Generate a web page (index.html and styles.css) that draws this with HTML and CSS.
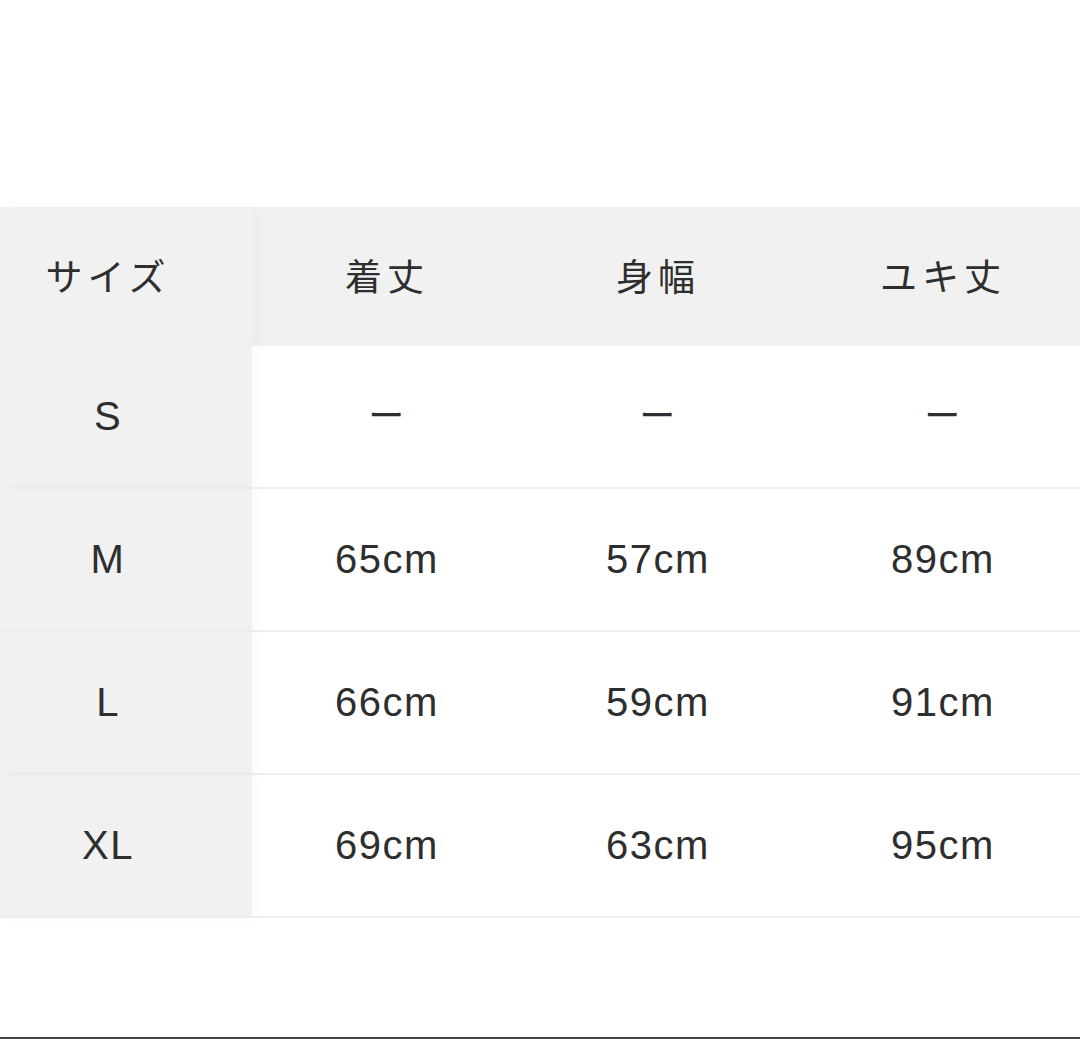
FILE: index.html
```html
<!DOCTYPE html>
<html lang="ja">
<head>
<meta charset="utf-8">
<title>サイズ表</title>
<link rel="stylesheet" href="styles.css">
</head>
<body>
<div class="page">
  <div class="table">
    <div class="row head">
      <div class="cell label jp">サイズ</div>
      <div class="cell jp">着丈</div>
      <div class="cell jp">身幅</div>
      <div class="cell jp last">ユキ丈</div>
    </div>
    <div class="row">
      <div class="cell label">S</div>
      <div class="cell dash">ー</div>
      <div class="cell dash">ー</div>
      <div class="cell dash last">ー</div>
    </div>
    <div class="row">
      <div class="cell label">M</div>
      <div class="cell">65cm</div>
      <div class="cell">57cm</div>
      <div class="cell last">89cm</div>
    </div>
    <div class="row">
      <div class="cell label">L</div>
      <div class="cell">66cm</div>
      <div class="cell">59cm</div>
      <div class="cell last">91cm</div>
    </div>
    <div class="row">
      <div class="cell label">XL</div>
      <div class="cell">69cm</div>
      <div class="cell">63cm</div>
      <div class="cell last">95cm</div>
    </div>
  </div>
  <div class="spacer"></div>
  <div class="bottom-rule"></div>
</div>
</body>
</html>
```
FILE: styles.css
```css
html, body {
  margin: 0;
  padding: 0;
  background: #ffffff;
}

.page {
  width: 1080px;
  height: 1039px;
  display: flex;
  flex-direction: column;
  padding-top: 207px;
  box-sizing: border-box;
  font-family: "Liberation Sans", "Noto Sans CJK JP", sans-serif;
  color: #2e2e2e;
}

.table {
  display: flex;
  flex-direction: column;
}

.row {
  display: grid;
  grid-template-columns: 252px 270px 272px 286px;
  height: 143px;
  box-sizing: border-box;
  border-bottom: 2px solid #efefef;
}

.row.head {
  height: 139px;
  background: #f1f1f1;
  border-bottom: none;
}

.cell {
  display: flex;
  align-items: center;
  justify-content: center;
  font-size: 40px;
  letter-spacing: 1.5px;
}

.cell.label {
  background: #f1f1f1;
  padding-right: 36px;
  box-shadow: 6px 0 14px rgba(0, 0, 0, 0.025);
}

.cell.last {
  padding-left: 12px;
}

.jp {
  font-family: "Noto Sans CJK JP", sans-serif;
  font-weight: 400;
  font-size: 37px;
  letter-spacing: 5px;
  padding-bottom: 4px;
}

.cell.label.jp {
  padding-right: 36px;
}

.dash {
  font-family: "Noto Sans CJK JP", sans-serif;
  font-weight: 400;
  font-size: 36px;
  padding-bottom: 8px;
}

.spacer {
  flex: 1;
}

.bottom-rule {
  height: 2px;
  background: #444444;
}
```
